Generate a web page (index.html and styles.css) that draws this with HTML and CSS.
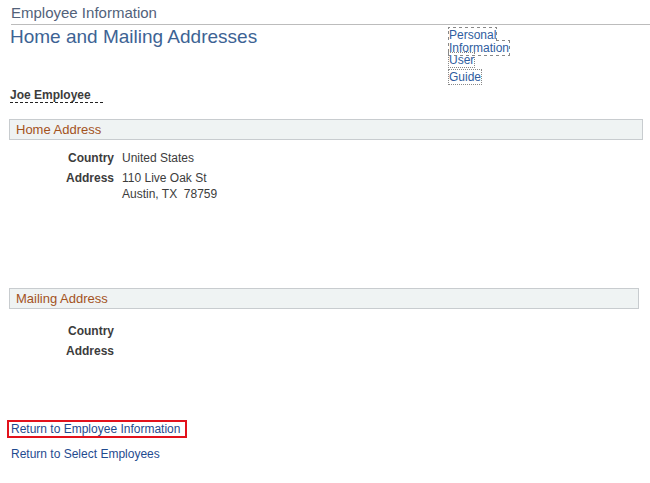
FILE: index.html
```html
<!DOCTYPE html>
<html>
<head>
<meta charset="utf-8">
<link rel="stylesheet" href="styles.css">
</head>
<body>
<div class="page">
  <div class="banner">Employee Information</div>
  <div class="top">
    <h1 class="title">Home and Mailing Addresses</h1>
    <div class="side-links">
      <div class="side-item"><a class="dotted" href="#">Personal Information</a></div>
      <div class="side-item"><a class="dotted" href="#">User</a></div>
      <div class="side-item guide"><a class="dotted" href="#">Guide</a></div>
    </div>
  </div>
  <div class="emp"><span class="emp-name">Joe Employee</span></div>

  <div class="section home">
    <div class="section-bar">Home Address</div>
    <div class="fields">
      <div class="row"><div class="label">Country</div><div class="value">United States</div></div>
      <div class="row"><div class="label">Address</div><div class="value">110 Live Oak St<br>Austin, TX&nbsp; 78759</div></div>
    </div>
  </div>

  <div class="section mail">
    <div class="section-bar">Mailing Address</div>
    <div class="fields">
      <div class="row"><div class="label">Country</div><div class="value"></div></div>
      <div class="row"><div class="label">Address</div><div class="value"></div></div>
    </div>
  </div>

  <div class="returns">
    <div class="ret-item"><a class="ret boxed" href="#">Return to Employee Information</a></div>
    <div class="ret-item"><a class="ret" href="#">Return to Select Employees</a></div>
  </div>
</div>
</body>
</html>
```
FILE: styles.css
```css
html, body {
  margin: 0;
  padding: 0;
  background: #ffffff;
}
body {
  font-family: "Liberation Sans", Arial, sans-serif;
  color: #333333;
}
.page {
  width: 650px;
}
.banner {
  margin-left: 11px;
  padding-top: 4px;
  height: 20px;
  font-size: 15px;
  line-height: 18px;
  color: #52627a;
  border-bottom: 1px solid #bcbcbc;
}
.top {
  display: flex;
  height: 60px;
}
.title {
  margin: 0;
  padding: 2px 0 0 10px;
  width: 439px;
  font-size: 19px;
  font-weight: normal;
  line-height: 20px;
  color: #3d6394;
}
.side-links {
  width: 62px;
  padding-top: 4px;
  font-size: 12px;
  line-height: 12.5px;
}
.side-item.guide {
  margin-top: 4px;
}
.dotted {
  color: #2f5da0;
  text-decoration: none;
  outline: 1px dotted #888888;
}
.emp {
  padding-left: 10px;
  height: 34px;
}
.emp-name {
  display: inline-block;
  font-size: 12px;
  font-weight: bold;
  line-height: 14px;
  color: #3c3c3c;
  padding-right: 12px;
  border-bottom: 1px dashed #222222;
}
.section-bar {
  margin-left: 9px;
  height: 19px;
  padding-left: 6px;
  font-size: 13px;
  line-height: 19px;
  color: #a3521c;
  background: #eff3f3;
  border: 1px solid #c8cccf;
}
.section.home .section-bar {
  width: 626px;
}
.section.mail .section-bar {
  width: 622px;
}
.section.home {
  height: 169px;
}
.section.mail {
  height: 131px;
}
.section.home .fields {
  padding-top: 10px;
}
.section.mail .fields {
  padding-top: 14px;
}
.row {
  display: flex;
  font-size: 12px;
  line-height: 16px;
  margin-bottom: 4px;
}
.label {
  width: 114px;
  text-align: right;
  font-weight: bold;
  color: #3c3c3c;
}
.value {
  padding-left: 8px;
  color: #3c3c3c;
}
.returns {
  padding-left: 7px;
}
.ret-item {
  height: 25px;
}
.ret {
  display: inline-block;
  font-size: 12px;
  line-height: 14px;
  color: #1f4b8f;
  text-decoration: none;
  padding: 0 5px 0 2px;
  border: 2px solid transparent;
}
.ret.boxed {
  border-color: #e2121c;
}
```
